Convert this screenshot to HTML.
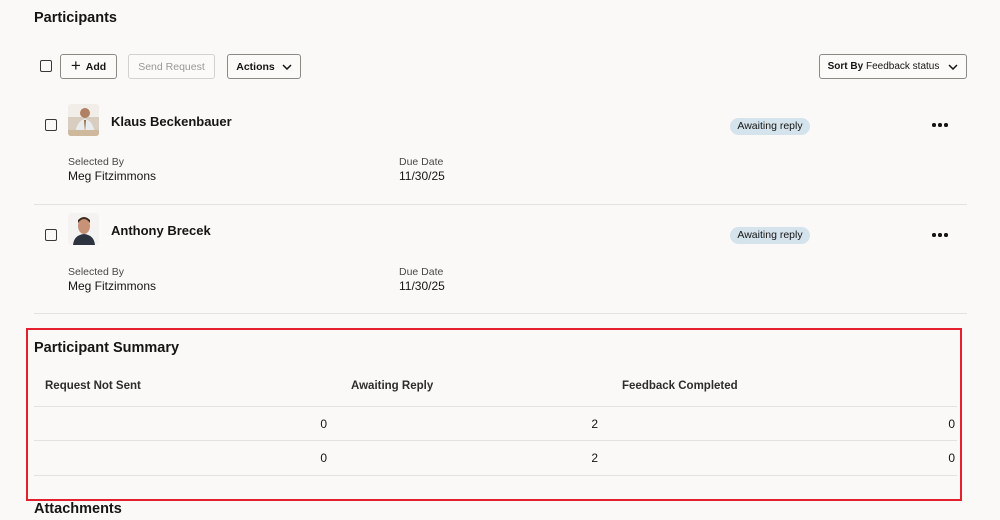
<!DOCTYPE html>
<html><head><style>
body{margin:0;width:1000px;height:520px;background:#faf9f8;font-family:"Liberation Sans",sans-serif;color:#161513;position:relative;overflow:hidden}
.a{position:absolute}
h2{position:absolute;margin:0;font-size:14.5px;font-weight:bold}
.btn{position:absolute;top:54px;height:25px;border:1px solid #8c8985;border-radius:3px;font-size:10.5px;font-weight:bold;display:flex;align-items:center;justify-content:center;box-sizing:border-box;background:#fbfaf9}
.cb{position:absolute;width:10px;height:10px;border:1.5px solid #3a3835;border-radius:2px}
.name{position:absolute;font-size:13px;font-weight:bold}
.lbl{position:absolute;font-size:10.5px;color:#4a4845}
.val{position:absolute;font-size:12px}
.badge{position:absolute;width:80px;height:17px;border-radius:9px;background:#d5e3ec;font-size:10.5px;text-align:center;line-height:17px}
.dots{position:absolute;width:16px;height:4px}
.dots i{position:absolute;top:0;width:3.5px;height:3.5px;border-radius:50%;background:#161513}
.hr{position:absolute;height:1px;background:#e4e2df}
.th{position:absolute;top:380px;font-size:11.5px;font-weight:bold;color:#2f2d2a}
.n{position:absolute;font-size:12px;text-align:right;width:20px}
.av{position:absolute;width:31px;height:32px;border-radius:3px;overflow:hidden}
</style></head><body>
<h2 style="left:34px;top:10px">Participants</h2>
<div class="cb" style="left:40px;top:60px"></div>
<div class="btn" style="left:60px;width:57px"><span style="font-size:17px;font-weight:normal;margin-right:5px;margin-top:-2px">+</span>Add</div>
<div class="btn" style="left:128px;width:87px;color:#9a9794;font-weight:normal;border-color:#d3d1ce">Send Request</div>
<div class="btn" style="left:227px;width:74px">Actions <svg width="10" height="6" style="margin-left:7px"><path d="M1 1l4 4 4-4" stroke="#161513" stroke-width="1.5" fill="none"/></svg></div>
<div class="btn" style="left:819px;width:148px;font-size:10px">Sort By&nbsp;<span style="font-weight:normal">Feedback status</span><svg width="10" height="6" style="margin-left:9px"><path d="M1 1l4 4 4-4" stroke="#161513" stroke-width="1.5" fill="none"/></svg></div>

<div class="cb" style="left:45px;top:119px"></div>
<div class="av" style="left:68px;top:104px;background:linear-gradient(#f1eee9 0 40%,#d9cdbf 40%)"><svg width="31" height="32"><circle cx="17" cy="9" r="5" fill="#b08064"/><path d="M7 32 Q8 17 17 15 Q26 17 27 32Z" fill="#e9ecef"/><path d="M16 16 L18 16 L17 28Z" fill="#9a6b3d"/><rect x="0" y="26" width="31" height="6" fill="#cfb99c"/></svg></div>
<div class="name" style="left:111px;top:114px">Klaus Beckenbauer</div>
<div class="badge" style="left:730px;top:118px">Awaiting reply</div>
<div class="dots" style="left:932px;top:123px"><i style="left:0"></i><i style="left:6px"></i><i style="left:12px"></i></div>
<div class="lbl" style="left:68px;top:156px">Selected By</div>
<div class="val" style="left:68px;top:169px">Meg Fitzimmons</div>
<div class="lbl" style="left:399px;top:156px">Due Date</div>
<div class="val" style="left:399px;top:169px">11/30/25</div>
<div class="hr" style="left:34px;top:204px;width:933px"></div>

<div class="cb" style="left:45px;top:229px"></div>
<div class="av" style="left:68px;top:213px;background:#f4f3f1"><svg width="31" height="32"><path d="M5 32 Q6 22 16 21 Q26 22 27 32Z" fill="#2d3440"/><ellipse cx="16" cy="13" rx="6" ry="8" fill="#c79276"/><path d="M10 10 Q16 2 22 10 L22 7 Q16 1 10 7Z" fill="#3a2a20"/></svg></div>
<div class="name" style="left:111px;top:223px">Anthony Brecek</div>
<div class="badge" style="left:730px;top:227px">Awaiting reply</div>
<div class="dots" style="left:932px;top:233px"><i style="left:0"></i><i style="left:6px"></i><i style="left:12px"></i></div>
<div class="lbl" style="left:68px;top:266px">Selected By</div>
<div class="val" style="left:68px;top:279px">Meg Fitzimmons</div>
<div class="lbl" style="left:399px;top:266px">Due Date</div>
<div class="val" style="left:399px;top:279px">11/30/25</div>
<div class="hr" style="left:34px;top:313px;width:933px"></div>

<div class="a" style="left:26px;top:328px;width:932px;height:169px;border:2px solid #e5202e"></div>
<h2 style="left:34px;top:340px">Participant Summary</h2>
<div class="th" style="left:45px">Request Not Sent</div>
<div class="th" style="left:351px">Awaiting Reply</div>
<div class="th" style="left:622px">Feedback Completed</div>
<div class="hr" style="left:34px;top:406px;width:923px"></div>
<div class="n" style="left:307px;top:417px">0</div><div class="n" style="left:578px;top:417px">2</div><div class="n" style="left:935px;top:417px">0</div>
<div class="hr" style="left:34px;top:440px;width:923px"></div>
<div class="n" style="left:307px;top:451px">0</div><div class="n" style="left:578px;top:451px">2</div><div class="n" style="left:935px;top:451px">0</div>
<div class="hr" style="left:34px;top:475px;width:923px"></div>
<h2 style="left:34px;top:501px">Attachments</h2>
</body></html>
